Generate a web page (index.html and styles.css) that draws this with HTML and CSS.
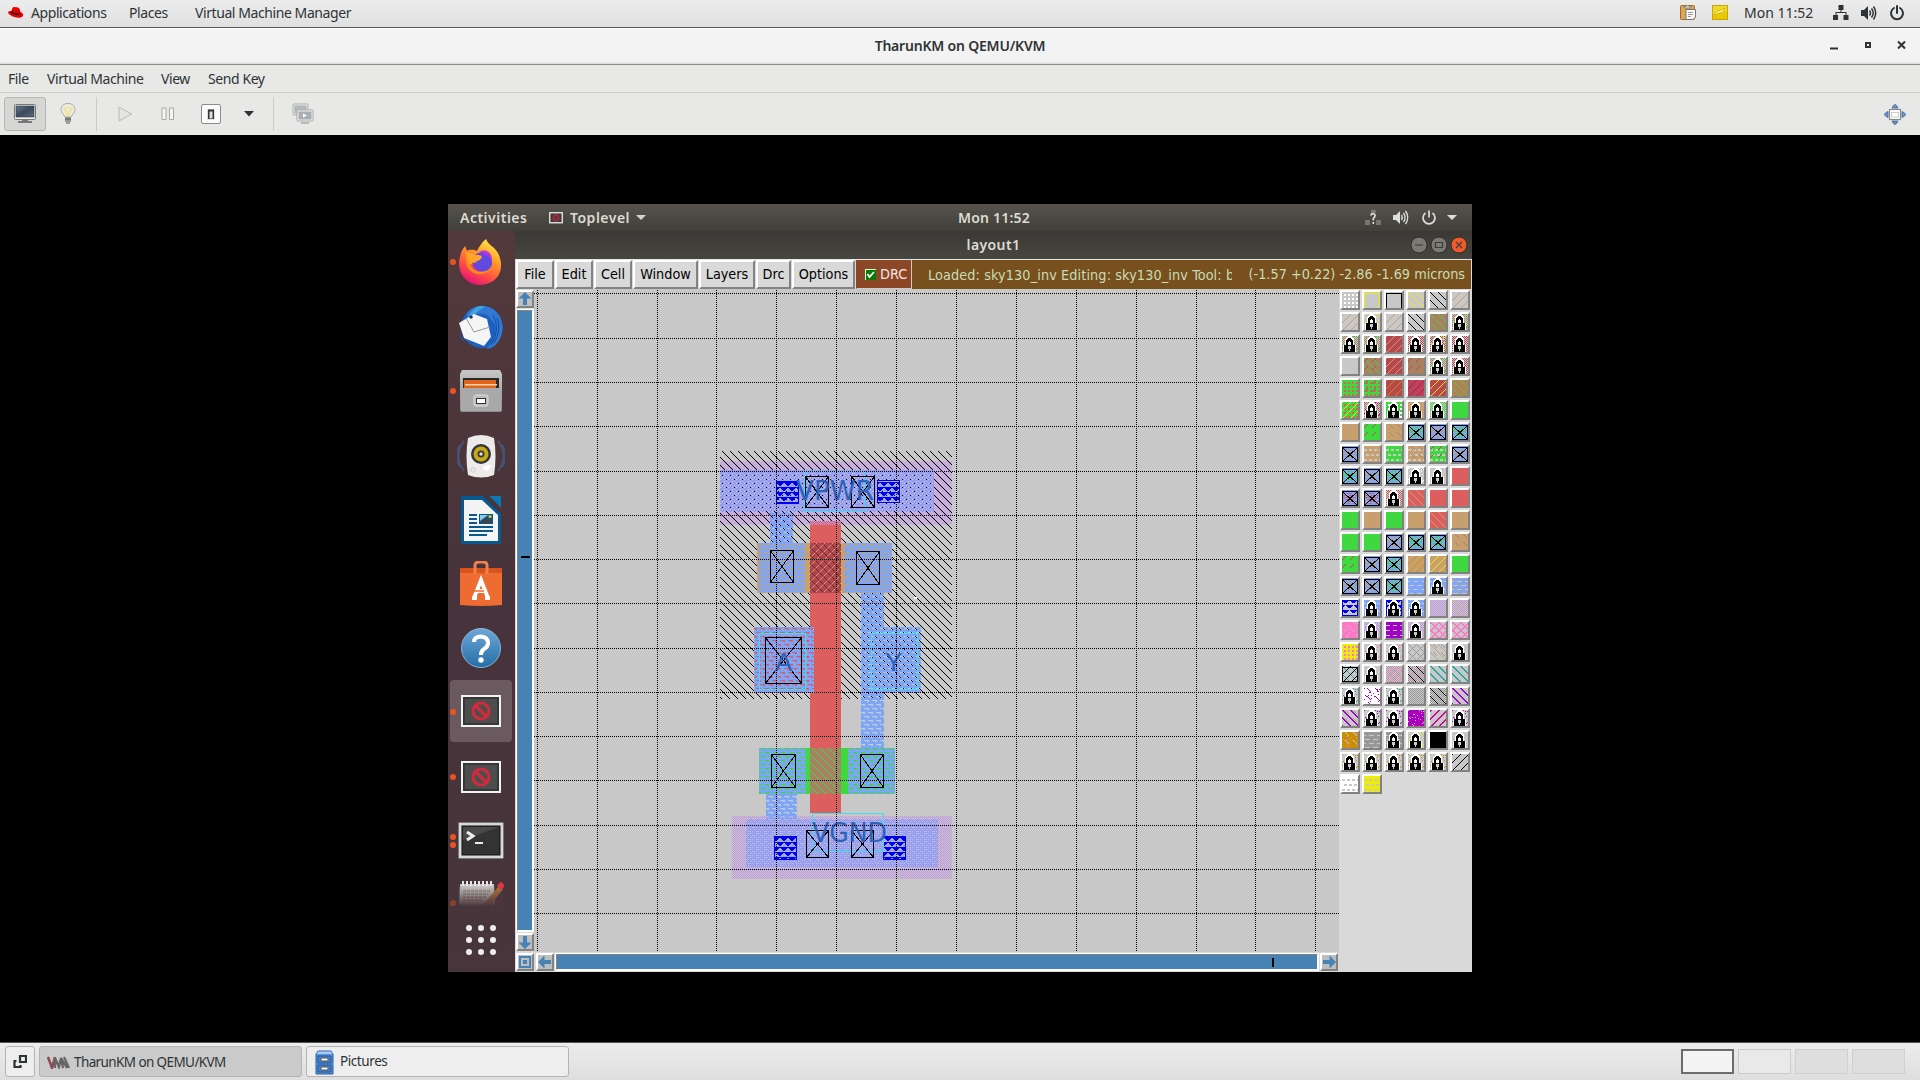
FILE: index.html
```html
<!DOCTYPE html>
<html lang="en">
<head>
<meta charset="utf-8">
<title>TharunKM on QEMU/KVM</title>
<link rel="stylesheet" href="styles.css">
</head>
<body>
<div class="host">
  <header class="panel">
    <svg class="hat" width="16" height="14" viewBox="0 0 16 14"><path d="M4 3C5 0 7 1 8 1.300C11 1 12 3 12.500 6C15 7 16 9 14.500 10.500C12 13 6 11.500 3 9.500C1 8.500-.5 7 .3 5.800C1 5 2.500 5 3.400 5.200Z" fill="#e80000"/><path d="M3.400 5.300C5 8 9 9 12.400 7.600" stroke="#111" stroke-width="1.400" fill="none"/></svg>
    <span class="pm pm1">Applications</span><span class="pm pm2">Places</span><span class="pm pm3">Virtual Machine Manager</span>
    <div class="tray">
      <svg width="17" height="17" viewBox="0 0 17 17"><rect x=".5" y="1.500" width="14" height="14" rx="1" fill="#dda45a" stroke="#a5681c"/><path d="M4 4V2.500H6Q7.500-.5 9 2.500H11V4Z" fill="#ddd" stroke="#777" stroke-width=".8"/><path d="M6 5.500H15.500V13L13 15.500H6Z" fill="#fafafa" stroke="#777"/><path d="M8 8.500H13M8 10.500H13M8 12.500H11" stroke="#999"/></svg>
      <svg class="note" width="16" height="15" viewBox="0 0 16 15"><rect x=".5" y=".5" width="15" height="14" fill="#f1d92a" stroke="#c6a614"/><path d="M1 10L9 4L13 5L6 10L15 6V14H1Z" fill="#e8c800"/><path d="M2 10L4 7L13 3L11 7L5 9Z" fill="#fff27a" stroke="#c6a614" stroke-width=".7"/></svg>
      <span class="clock">Mon 11:52</span>
      <svg class="net" width="16" height="15" viewBox="0 0 16 15" fill="#2e3436"><path d="M5.500 0H10.500V5H5.500ZM0 10H5V15H0ZM10.500 10H15.500V15H10.500ZM7.500 5H8.500V7H13.500V10H12.500V8H3.500V10H2.500V7H7.500Z"/></svg>
      <svg class="vol" width="16" height="16" viewBox="0 0 16 16"><path d="M0 5H3L7 1V15L3 11H0Z" fill="#2e3436"/><path d="M8.500 5.500Q10.500 8 8.500 10.500M10.500 3.500Q14 8 10.500 12.500M12.500 1.500Q17 8 12.500 14.500" fill="none" stroke="#2e3436" stroke-width="1.500"/></svg>
      <svg class="pow" width="16" height="16" viewBox="0 0 16 16"><path d="M5 3A6 6 0 1 0 11 3M8 1V8" fill="none" stroke="#2e3436" stroke-width="2" stroke-linecap="round"/></svg>
    </div>
  </header>
  <div class="titlebar"><b class="wintitle">TharunKM on QEMU/KVM</b>
    <svg class="winbtns" width="78" height="12" viewBox="0 0 78 12"><path d="M1 8.500H9" stroke="#2e3436" stroke-width="2"/><path d="M37 3H41V7H37Z" fill="none" stroke="#2e3436" stroke-width="2"/><path d="M69 1.500L76 8.500M76 1.500L69 8.500" stroke="#2e3436" stroke-width="2"/></svg>
  </div>
  <nav class="menubar"><span class="m1">File</span><span class="m2">Virtual Machine</span><span class="m3">View</span><span class="m4">Send Key</span></nav>
  <div class="toolbar">
    <div class="toolbtn"><svg width="22" height="20" viewBox="0 0 22 20"><defs><linearGradient id="scr" x2="1" y2="1"><stop stop-color="#6b7789"/><stop offset=".5" stop-color="#3c4a5e"/><stop offset="1" stop-color="#5b6b80"/></linearGradient></defs><rect x=".5" y=".5" width="21" height="15" rx="1" fill="#eee" stroke="#777"/><rect x="2" y="2" width="18" height="11" fill="url(#scr)" stroke="#2d3743" stroke-width=".6"/><path d="M8 16H14V17H18V19H4V17H8Z" fill="#777"/></svg></div>
    <svg class="bulb" width="16" height="22" viewBox="0 0 16 22"><path d="M5 14C4 11 1 10 1 6.500A7 6.200 0 0 1 15 6.500C15 10 12 11 11 14Z" fill="#ecebdc" stroke="#aaa"/><path d="M4 6Q8 3 12 6L9 9V13M4 6L7 9V13" fill="none" stroke="#f0dc80" stroke-width="1.200"/><path d="M5 14H11V19H5Z" fill="#9a9a94"/><path d="M5 16H11M6 20H10" stroke="#555"/></svg>
    <i class="sep sep1"></i>
    <svg class="play" width="15" height="16" viewBox="0 0 15 16"><path d="M1 1L13.500 8L1 15Z" fill="#e4e4e2" stroke="#b9b9b6"/></svg>
    <svg class="pause" width="14" height="14" viewBox="0 0 14 14"><path d="M1 1H5V12.500H1ZM8.500 1H12.500V12.500H8.500Z" fill="#f4f4f3" stroke="#a9a9a6"/></svg>
    <svg class="switch" width="20" height="21" viewBox="0 0 20 21"><rect x=".5" y=".5" width="19" height="19" rx="1.500" fill="#fbfbfb" stroke="#8c8c8a"/><rect x="6" y="5" width="8" height="11" fill="#ddd"/><path d="M7 5.500H13V15H7Z" fill="#333"/><path d="M8.500 7.500H11.500V14.500H8.500Z" fill="#ddd"/></svg>
    <svg class="caret" width="10" height="6" viewBox="0 0 10 6"><path d="M0 0H10L5 5.500Z" fill="#2e3436"/></svg>
    <i class="sep sep2"></i>
    <svg class="snaps" width="22" height="22" viewBox="0 0 22 22" stroke="#aaa"><rect x="1" y="1" width="15" height="11" rx="1" fill="#f2f2f0"/><rect x="3" y="3" width="11" height="7" fill="#b3bac0"/><rect x="5" y="7" width="16" height="11" rx="1" fill="#f2f2f0"/><rect x="7" y="9" width="12" height="7" fill="#a7b0b8"/><path d="M11 10.500L15 12.500L11 14.500Z" fill="#fff" stroke="none"/><path d="M9 20H17" stroke-width="1.500"/></svg>
    <svg class="fit" width="22" height="21" viewBox="0 0 22 21"><g fill="#6f93c7" stroke="#3b62a0" stroke-width=".8"><path d="M8 4Q11-3 14 4ZM8 17Q11 24 14 17ZM4 7.500Q-3 10.500 4 13.500ZM18 7.500Q25 10.500 18 13.500Z"/></g><rect x="5.500" y="5.500" width="11" height="10" fill="#fff" stroke="#888a85" stroke-width="1.200"/><rect x="7.500" y="8.500" width="7" height="4.500" fill="none" stroke="#ccc"/></svg>
  </div>
  <main class="viewport">
    <section class="guest">
      <div class="gbar">
        <span class="act">Activities</span>
        <svg class="gapp" width="14" height="12" viewBox="0 0 14 12"><rect x=".75" y=".75" width="12.500" height="10" fill="#3b3b3b" stroke="#eee" stroke-width="1.300"/><circle cx="7" cy="5.800" r="2.800" fill="none" stroke="#c3213b" stroke-width="1.300"/><path d="M5 4L9 8" stroke="#c3213b"/></svg>
        <span class="top">Toplevel</span>
        <svg class="gcaret" width="10" height="5" viewBox="0 0 10 5"><path d="M0 0H10L5 5Z" fill="#d8d5d0"/></svg>
        <span class="gclock">Mon 11:52</span>
        <svg class="gtray" width="92" height="18" viewBox="0 0 92 18"><path d="M6 1H11V4H6ZM0 11H5V16H0ZM11 11H16V16H11Z" fill="#77756e"/><path d="M5.700 6.500Q6.500 4.500 8.500 4.700Q11 5.500 9.500 8L8.300 9.500V11.500M8.300 13V15" fill="none" stroke="#ddd" stroke-width="1.700"/><path d="M28 6H31L35 2V15L31 11H28Z" fill="#ddd"/><path d="M36.500 6Q38 8.500 36.500 11M38.500 4Q41.500 8.500 38.500 13M40.500 2Q45 8.500 40.500 15" fill="none" stroke="#ddd" stroke-width="1.400"/><path d="M60.500 4A6 6 0 1 0 67.500 4M64 1.500V8.500" fill="none" stroke="#ddd" stroke-width="1.700"/><path d="M82 6H92L87 11Z" fill="#ddd"/></svg>
      </div>
      <div class="gbody">
        <aside class="dock">
          <div class="app one"><svg width="46" height="48" viewBox="0 0 46 48"><defs><linearGradient id="ff" x1=".8" y1="0" x2=".3" y2="1"><stop stop-color="#fff44f"/><stop offset=".35" stop-color="#ffa225"/><stop offset=".7" stop-color="#ff4f45"/><stop offset="1" stop-color="#e3107a"/></linearGradient></defs><path d="M28 1C30 7 36 8 40 15C48 31 40 46 23 47C7 47-2 33 2 19C3 13 5 11 7 8L9 13C12 11 16 12 19 13C21 9 24 4 28 1Z" fill="url(#ff)"/><circle cx="24" cy="24" r="10" fill="#7b3fd8"/><path d="M7 9C8 16 10 17 19 17C26 17 24 20 21 23C18 28 14 21 12 27C17 37 31 36 35 24C36 38 12 42 8 25Z" fill="#ff8b1a"/><circle cx="26" cy="25" r="8" fill="#5f4be0"/><path d="M21 13Q34 10 34 23Q30 16 21 13" fill="#b833e1"/><path d="M8 14C16 18 23 16 24 19C22 24 17 22 12 27Z" fill="#ffa52c"/></svg></div>
          <div class="app"><svg width="48" height="48" viewBox="0 0 48 48"><circle cx="25" cy="24" r="21" fill="#1d5fc0"/><path d="M10 11C16 0 35-1 43 14C50 31 40 46 29 46C40 35 42 24 33 15C27 8 17 9 10 20Z" fill="#3178d2"/><path d="M12 12Q20 0 28 4Q17 9 13 20Z" fill="#42a3dd"/><path d="M2 20L17 11L30 16L34 34L27 43L7 35Z" fill="#f5f5f5"/><path d="M9 15L17 29L33 24" fill="none" stroke="#999" stroke-width="1"/><path d="M1 22Q3 37 14 44L4 36Z" fill="#1c58b8"/><path d="M36 12Q44 27 34 42M40 15Q45 27 37 40" stroke="#154ba0" fill="none"/><circle cx="14" cy="14" r="1.800" fill="#203a66"/></svg></div>
          <div class="app one"><svg width="44" height="44" viewBox="0 0 44 44"><defs><linearGradient id="cab" x2="0" y2="1"><stop stop-color="#c8c8c8"/><stop offset="1" stop-color="#8d8d8d"/></linearGradient></defs><path d="M3 1H41L43 5V41Q43 43 41 43H3Q1 43 1 41V5Z" fill="url(#cab)"/><rect x="4" y="9" width="36" height="10" fill="#292929"/><path d="M5 11H37V19H5Z" fill="#df651d"/><path d="M6 15H38V16.500H6Z" fill="#ffd3a5"/><path d="M2 19H42V42H2Z" fill="#a9a9a9"/><rect x="15" y="26" width="14" height="11" rx="2" fill="#bdbdbd" stroke="#ddd"/><rect x="17.500" y="29.500" width="9" height="5" fill="#fff" stroke="#333"/></svg></div>
          <div class="app"><svg width="48" height="44" viewBox="0 0 48 44"><path d="M7 7Q-4 22 7 37M41 7Q52 22 41 37M3 11Q-3 22 3 33M45 11Q51 22 45 33" stroke="#485170" stroke-width="2" fill="none"/><path d="M11 4Q24-2 37 4Q40 22 37 41Q24 46 11 41Q8 22 11 4Z" fill="#ecebe9"/><circle cx="24" cy="20" r="10" fill="#33363a"/><circle cx="24" cy="20" r="7.500" fill="#c9a914"/><circle cx="24" cy="20" r="3.500" fill="#373737"/><circle cx="24" cy="20" r="1.700" fill="#ddd"/><circle cx="16" cy="36" r="2.200" fill="none" stroke="#ccc"/><path d="M27 33Q31 37 32 31" stroke="#fff" stroke-width="4" fill="none"/></svg></div>
          <div class="app"><svg width="40" height="48" viewBox="0 0 40 48"><path d="M2 0H24L40 15V46Q40 48 38 48H2Q0 48 0 46V2Q0 0 2 0Z" fill="#065a8d"/><path d="M28 0H40V12Z" fill="#0878b8"/><path d="M22 0H28L40 12V18Z" fill="#4a343b"/><path d="M3 4H21L37 19V45H3Z" fill="#f4f4f4"/><path d="M8 19H16M8 23H16M8 27H16M8 31H32M8 35H32M8 39H26" stroke="#07598b" stroke-width="2"/><rect x="18" y="18" width="14" height="10" fill="#07598b"/><path d="M19 27L24 21L27 24L29 22L32 27Z" fill="#444"/><circle cx="29" cy="20.500" r="1.500" fill="#f5c211"/><path d="M19 19H27L19 25Z" fill="#8fc8eb"/></svg></div>
          <div class="app"><svg width="42" height="46" viewBox="0 0 42 46"><path d="M0 7H42V44Q21 46 0 44Z" fill="#ee6b31"/><path d="M0 7H42V12H0Z" fill="#d9541c"/><path d="M15 13V4Q15 1 19 1H23Q27 1 27 4V13" fill="none" stroke="#f08050" stroke-width="3"/><path d="M12 37H17M25 37H30M14 37L21 19L28 37M15 30H27" stroke="#fff" stroke-width="3.800" fill="none"/><path d="M14 30H24" stroke="#ee6b31" stroke-width="1.500"/></svg></div>
          <div class="app"><svg width="42" height="42" viewBox="0 0 42 42"><defs><linearGradient id="hp" x2="0" y2="1"><stop stop-color="#6ea6d9"/><stop offset="1" stop-color="#246ea6"/></linearGradient></defs><circle cx="21" cy="21" r="19.500" fill="url(#hp)" stroke="#8ab4da"/><path d="M14 15Q14 9.500 21 9.500Q28 10 28 16Q28 20 24 22Q21 24 21 28" fill="none" stroke="#fff" stroke-width="4"/><circle cx="21" cy="33" r="2.700" fill="#fff"/></svg></div>
          <div class="app one active"><svg width="40" height="32" viewBox="0 0 40 32"><use href="#noentry"/></svg></div>
          <div class="app one"><svg width="40" height="32" viewBox="0 0 40 32"><g id="noentry"><rect x="1" y="1" width="38" height="30" fill="#444" stroke="#f2f2f2" stroke-width="2"/><rect x="3" y="3" width="34" height="26" fill="#4d4d4d" stroke="#262626"/><circle cx="20" cy="16" r="8" fill="none" stroke="#d02b3d" stroke-width="3.200"/><path d="M14.500 10.500L25.500 21.500" stroke="#d02b3d" stroke-width="3.200"/></g></svg></div>
          <div class="app two"><svg width="46" height="38" viewBox="0 0 46 38"><rect x=".5" y=".5" width="45" height="36" rx="1" fill="#d8d8d6" stroke="#777"/><rect x="4" y="4" width="38" height="29" fill="#333" stroke="#111"/><path d="M5 5H41L5 18Z" fill="#4a4a4a"/><path d="M9 10L15 14L9 18" fill="none" stroke="#eee" stroke-width="3"/><path d="M17 21H25" stroke="#eee" stroke-width="2"/></svg></div>
          <div class="app one fade"><svg width="46" height="26" viewBox="0 0 46 26"><defs><linearGradient id="fd" x2="0" y2="1"><stop stop-color="#4a353b" stop-opacity="0"/><stop offset="1" stop-color="#4a353b"/></linearGradient></defs><path d="M2 4H36L37 26H1Z" fill="#c6c3c0"/><path d="M5 1V6M9 1V6M13 1V6M17 1V6M21 1V6M25 1V6M29 1V6M33 1V6" stroke="#e5e5e5" stroke-width="2"/><path d="M5 11H33M5 14H30M5 17H28M5 20H25" stroke="#777" stroke-dasharray="3 1"/><path d="M24 26L41 6L45 9L32 26Z" fill="#b67635"/><path d="M39 6L42 2Q47 3 46 7L43 10Z" fill="#e03842"/><rect y="6" width="46" height="20" fill="url(#fd)"/></svg></div>
          <div class="allapps"><svg width="30" height="30" viewBox="0 0 30 30" fill="#eee"><circle cx="3" cy="3" r="3"/><circle cx="15" cy="3" r="3"/><circle cx="27" cy="3" r="3"/><circle cx="3" cy="15" r="3"/><circle cx="15" cy="15" r="3"/><circle cx="27" cy="15" r="3"/><circle cx="3" cy="27" r="3"/><circle cx="15" cy="27" r="3"/><circle cx="27" cy="27" r="3"/></svg></div>
        </aside>
        <div class="magic">
          <div class="mtitle"><b>layout1</b>
            <svg width="58" height="18" viewBox="0 0 58 18"><g stroke="#2f2e2a"><circle cx="9" cy="9" r="8" fill="#7b7972"/><circle cx="29" cy="9" r="8" fill="#7b7972"/><circle cx="49" cy="9" r="8" fill="#ee5a2b"/></g><path d="M5 9H13M25.500 6.500H32.500V11.500H25.500ZM46 6L52 12M52 6L46 12" fill="none" stroke="#3c3b37" stroke-width="1.200"/></svg>
          </div>
          <div class="mmenu">
            <span class="mb w1">File</span><span class="mb w2">Edit</span><span class="mb w3">Cell</span><span class="mb w4">Window</span><span class="mb w5">Layers</span><span class="mb w6">Drc</span><span class="mb w7">Options</span>
            <span class="drc"><svg width="11" height="11" viewBox="0 0 11 11"><rect width="11" height="11" fill="#cfc"/><rect x="1" y="1" width="10" height="10" fill="#087a08"/><path d="M2.500 5L4.500 8L9 3" fill="none" stroke="#fff" stroke-width="1.800"/></svg>DRC</span>
            <span class="status"><span class="loaded">Loaded: sky130_inv Editing: sky130_inv Tool: b</span><span class="coords">(-1.57 +0.22) -2.86 -1.69 microns</span></span>
          </div>
          <div class="work">
            <div class="draw">
              <div class="vscroll">
                <i class="sb"><svg width="14" height="14" viewBox="0 0 14 14"><path d="M7 0L13.500 6.500H9V13H5V6.500H.5Z"/></svg></i>
                <i class="trough"><i class="vmark"></i></i>
                <i class="sb"><svg width="14" height="14" viewBox="0 0 14 14"><path d="M7 14L13.500 7.500H9V1H5V7.500H.5Z"/></svg></i>
              </div>
              <svg class="canvas" width="805" height="663" viewBox="534 289 805 663" shape-rendering="crispEdges">
                <defs>
                  <pattern id="nw" width="8" height="8" patternUnits="userSpaceOnUse" x="722" y="451"><path d="M0 0h1v1h-1zM1 1h1v1h-1zM2 2h1v1h-1zM3 3h1v1h-1zM4 4h1v1h-1zM5 5h1v1h-1zM6 6h1v1h-1zM7 7h1v1h-1z"/></pattern>
                  <pattern id="tn" width="8" height="8" patternUnits="userSpaceOnUse"><path fill="#c8a070" d="M7 0h1v1h-1zM6 1h1v1h-1zM5 2h1v1h-1zM4 3h1v1h-1zM3 4h1v1h-1zM2 5h1v1h-1zM1 6h1v1h-1zM0 7h1v1h-1z"/></pattern>
                  <pattern id="gn" width="8" height="8" patternUnits="userSpaceOnUse"><path fill="#40d840" d="M0 0h1v1h-1zM1 1h1v1h-1zM2 2h1v1h-1zM3 3h1v1h-1zM4 4h1v1h-1zM5 5h1v1h-1zM6 6h1v1h-1zM7 7h1v1h-1z"/></pattern>
                  <pattern id="ck" width="2" height="2" patternUnits="userSpaceOnUse"><path fill="#c296e4" d="M0 0h1v1h-1zM1 1h1v1h-1z"/></pattern>
                  <pattern id="li" width="8" height="8" patternUnits="userSpaceOnUse" y="3"><path fill="#7da6f9" d="M0 0h8v1h-8zM5 1h3v1h-3zM0 2h3v1h-3zM5 2h3v1h-3zM0 3h8v2h-8zM1 5h3v1h-3zM1 6h6v1h-6zM0 7h8v1h-8z"/></pattern>
                  <pattern id="m1" width="8" height="8" patternUnits="userSpaceOnUse"><path fill="#92a0f5" d="M0 0h8v1h-8zM0 1h1v1h-1zM2 1h2v1h-2zM5 1h1v1h-1zM0 2h8v1h-8zM1 3h1v1h-1zM3 3h1v1h-1zM6 3h2v1h-2zM0 4h8v1h-8zM0 5h1v1h-1zM4 5h2v1h-2zM0 6h8v1h-8zM1 7h2v1h-2zM5 7h1v1h-1zM7 7h1v1h-1z"/></pattern>
                  <pattern id="vi" width="8" height="10" patternUnits="userSpaceOnUse" x="776" y="481"><path fill="#0000f0" d="M0 1h8v1h-8zM1 2h6v1h-6zM2 3h4v1h-4zM3 4h2v1h-2zM0 6h8v1h-8zM0 7h3v1h-3zM5 7h3v1h-3zM0 8h2v1h-2zM6 8h2v1h-2zM0 9h1v1h-1zM7 9h1v1h-1z"/></pattern>
                </defs>
                <rect x="534" y="289" width="805" height="663" fill="#c8c8c8"/>
                <rect x="720" y="451" width="232" height="248" fill="url(#nw)"/>
                <rect x="810" y="521" width="31" height="292" fill="#dd5e5e"/>
                <rect x="757" y="543" width="135" height="50" fill="#c8a070"/>
                <rect x="810" y="543" width="31" height="50" fill="#b34450"/>
                <rect x="810" y="543" width="31" height="50" fill="url(#tn)"/>
                <rect x="810" y="543" width="31" height="50" fill="url(#nw)" opacity=".4"/>
                <rect x="720" y="461" width="232" height="64" fill="url(#ck)"/>
                <rect x="732" y="816" width="220" height="63" fill="url(#ck)"/>
                <rect x="754" y="627" width="60" height="66" fill="#dd5e5e"/>
                <rect x="759" y="748" width="136" height="46" fill="#40d840"/>
                <rect x="810" y="748" width="31" height="46" fill="#aa8062"/>
                <rect x="810" y="748" width="31" height="46" fill="url(#gn)"/>
                <path fill="url(#li)" d="M770 512h23v31h-23zM759 543h46v50h-46zM845 543h47v50h-47zM861 593h23v34h37v66h-37v55h-23zM754 627h60v66h-60zM759 748h47v46h-47zM848 748h47v46h-47zM766 794h31v25h-31z"/>
                <path fill="url(#m1)" d="M720 470h214v42h-214zM746 819h192v48h-192z"/>
                <g fill="url(#vi)" stroke="#0000f0"><path d="M776.500 481.500h22v22h-22zM877.500 480.500h22v22h-22zM774.500 836.500h22v23h-22zM883.500 836.500h22v23h-22z"/></g>
                <g fill="none" stroke="#40e0e8"><path d="M804.500 471.500h60v40h-60zM812.500 813.500h71v38h-71zM759.500 633.500h46v56h-46zM871.500 633.500h46v56h-46z"/></g>
                <g fill="none" stroke="#000"><path d="M805.500 476.500h23v31h-23zM851.500 476.500h23v31h-23zM770.500 550.500h23v32h-23zM856.500 551.500h23v33h-23zM765.500 637.500h36v46h-36zM771.500 754.500h24v33h-24zM860.500 754.500h23v33h-23zM806.500 830.500h22v27h-22zM851.500 830.500h22v27h-22z"/><path d="M805 476l24 32m0-32l-24 32M851 476l24 32m0-32l-24 32M770 550l24 33m0-33l-24 33M856 551l24 34m0-34l-24 34M765 637l37 47m0-47l-37 47M771 754l25 34m0-34l-25 34M860 754l24 34m0-34l-24 34M806 830l23 28m0-28l-23 28M851 830l23 28m0-28l-23 28"/></g>
                <g class="lbl"><text x="796" y="500" textLength="78" lengthAdjust="spacingAndGlyphs">VPWR</text><text x="812" y="842" textLength="75" lengthAdjust="spacingAndGlyphs">VGND</text><text x="775" y="671">A</text><text x="885" y="671">Y</text></g>
                <path d="M534 293.500H1339M534 338.500H1339M534 382.500H1339M534 426.500H1339M534 471.500H1339M534 515.500H1339M534 559.500H1339M534 603.500H1339M534 648.500H1339M534 692.500H1339M534 736.500H1339M534 780.500H1339M534 825.500H1339M534 869.500H1339M534 913.500H1339M537.500 290V952M597.500 290V952M657.500 290V952M716.500 290V952M776.500 290V952M836.500 290V952M896.500 290V952M956.500 290V952M1016.500 290V952M1076.500 290V952M1136.500 290V952M1196.500 290V952M1255.500 290V952M1315.500 290V952" stroke="#000" stroke-dasharray="1 1" fill="none"/>
                <rect x="914" y="597" width="3" height="2" fill="#fff"/>
              </svg>
              <div class="hscroll">
                <i class="sb"><svg width="14" height="14" viewBox="0 0 14 14"><path d="M1 1H13V13H1Z" fill="#4682b4"/><path d="M3 3H11V11H3Z" fill="#bebebe"/><path d="M5 5H9V9H5Z"/></svg></i>
                <i class="sb lb"><svg width="14" height="14" viewBox="0 0 14 14"><path d="M0 7L6.500 .5V5H13V9H6.500V13.500Z"/></svg></i>
                <i class="trough"><i class="hmark"></i></i>
                <i class="sb"><svg width="14" height="14" viewBox="0 0 14 14"><path d="M14 7L7.500 .5V5H1V9H7.500V13.500Z"/></svg></i>
              </div>
            </div>
            <div class="palette" id="palette"></div>
          </div>
        </div>
      </div>
    </section>
  </main>
  <footer class="taskbar">
    <div class="tsk show"><svg width="14" height="15" viewBox="0 0 14 15" fill="none" stroke="#2e3436" stroke-width="2.200"><path d="M7 2H13V8H7ZM3.500 7H1.500V13H7.500V11"/></svg></div>
    <div class="tsk on"><svg width="23" height="13" viewBox="0 0 23 13" fill="none"><path d="M1 1L5 12L8 1" stroke="#8a4a56" stroke-width="2.500"/><path d="M8 12V2L12 11L14 2L16 12M14 2L20 12M17 1L22 12" stroke="#666" stroke-width="2.300"/></svg><span>TharunKM on QEMU/KVM</span></div>
    <div class="tsk pics"><svg width="19" height="25" viewBox="0 0 19 25"><path d="M3 1H16L18 4V24H1V4Z" fill="#5b92d8" stroke="#2b5ea6"/><path d="M3 1.500H16L17.500 4H1.500Z" fill="#a9cbf3"/><path d="M3 6H16V13H3ZM3 15H16V22H3Z" fill="#4a82cc" stroke="#24569c"/><path d="M6 8H13V11H6ZM6 17H13V20H6Z" fill="#fff" stroke="#555"/></svg><span>Pictures</span></div>
    <div class="ws"><i class="cur"></i><i></i><i class="dim"></i><i class="dim"></i></div>
  </footer>
</div>
<script src="palette.js"></script>
</body>
</html>
```
FILE: styles.css
```css
* { box-sizing: border-box; }
body { margin: 0; background: #000; overflow: hidden; }
svg { display: block; flex: none; }
i { font-style: normal; display: block; }
.host { width: 1920px; height: 1080px; display: flex; flex-direction: column; font: 14px/1 "Noto Sans", "Open Sans", sans-serif; color: #2e3436; white-space: nowrap; letter-spacing: -.42px; }

.panel { height: 28px; flex: none; display: flex; align-items: center; padding: 0 15px 2px 8px; background: linear-gradient(#ececec, #e0e0e0); border-bottom: 1px solid #595959; }
.hat { margin-right: 7px; }
.pm1 { width: 98px; }
.pm2 { width: 66px; }
.tray { margin-left: auto; display: flex; align-items: center; }
.note { margin: 0 16px 0 15px; }
.clock { width: 88px; font-size: 14px; letter-spacing: 0; }
.net { margin-left: 1px; }
.vol { margin: 0 12px 0 12px; }

.titlebar { height: 37px; flex: none; display: grid; grid-template-columns: 1fr auto 1fr; align-items: center; background: linear-gradient(#fff 1px, #f4f4f4 1px, #f2f2f2 34px, #d8d8d6); border-bottom: 1px solid #8f8f8a; }
.wintitle { grid-column: 2; font-size: 14px; font-weight: 600; letter-spacing: -.2px; }
.winbtns { justify-self: end; margin-right: 13px; }

.menubar { height: 28px; flex: none; display: flex; align-items: center; padding: 0 8px; background: #e8e8e7; border-bottom: 1px solid #cfcfcd; }
.m1 { width: 39px; }
.m2 { width: 114px; }
.m3 { width: 47px; }

.toolbar { height: 42px; flex: none; display: flex; align-items: center; padding: 0 14px 0 4px; background: #e8e8e7; }
.toolbtn { width: 42px; height: 34px; display: flex; align-items: center; justify-content: center; background: #d6d6d5; border: 1px solid #b5b5b3; border-radius: 3px; }
.bulb { margin: 0 20px 0 14px; }
.sep { width: 1px; height: 34px; background: #cbcbc9; }
.play { margin-left: 21px; }
.pause { margin-left: 28px; }
.switch { margin-left: 26px; }
.caret { margin-left: 23px; }
.sep2 { margin: 0 18px 0 19px; }
.fit { margin-left: auto; }

.viewport { flex: 1; min-height: 0; background: #000; padding: 69px 0 0 448px; }
.guest { width: 1024px; height: 768px; display: flex; flex-direction: column; overflow: hidden; background: #d9d9d9; }
.gbar { height: 27px; flex: none; display: flex; align-items: center; padding: 0 15px 0 12px; background: linear-gradient(#56534b, #403f3a); color: #dfdbd2; font-weight: 600; font-size: 14px; letter-spacing: .5px; }
.act { width: 89px; }
.top { margin: 0 6px 0 7px; }
.gclock { margin-left: 312px; letter-spacing: .2px; }
.gtray { margin-left: auto; }
.gbody { flex: 1; min-height: 0; display: flex; }

.dock { width: 67px; flex: none; display: flex; flex-direction: column; padding: 0 3px 0 2px; background: linear-gradient(#53393b, #46333b 50%, #48353c); overflow: hidden; }
.app { height: 64.2px; flex: none; width: 62px; display: grid; place-items: center; position: relative; border-radius: 4px; }
.app:first-child { margin: -1px 0 1px; }
.one::before, .two::before { content: ""; position: absolute; left: 0; top: 29px; width: 6px; height: 6px; border-radius: 50%; background: #e95420; }
.two::before { top: 25px; box-shadow: 0 8px 0 #e95420; }
.active { height: 62px; margin: 0 0 2.2px; background: #6a5a60; }
.fade { height: 35px; }
.fade svg { align-self: end; margin-bottom: 2px; }
.fade::before { top: 27px; opacity: .4; }
.allapps { flex: 1; display: grid; place-items: center; }

.magic { width: 957px; display: flex; flex-direction: column; font-family: "DejaVu Sans Condensed", "DejaVu Sans", sans-serif; font-stretch: condensed; font-size: 14.3px; letter-spacing: 0; color: #000; }
.mtitle { height: 28px; flex: none; display: grid; grid-template-columns: 1fr auto 1fr; align-items: center; padding: 0 4px; background: linear-gradient(#3a3935, #484640); color: #dfdbd2; font: 600 14px/1 "Noto Sans", "Open Sans", sans-serif; letter-spacing: .4px; }
.mtitle b { grid-column: 2; font-weight: 600; }
.mtitle svg { justify-self: end; }
.mmenu { height: 30px; flex: none; display: flex; border-top: 1px solid #e6e6e6; padding: 0 1px; background: #d9d9d9; }
.mb { display: grid; place-items: center; margin-right: 1px; border: 2px solid; border-color: #fff #828282 #828282 #fff; background: #d9d9d9; }
.w1 { width: 38px; }
.w2 { width: 38px; }
.w3 { width: 38px; }
.w4 { width: 65px; }
.w5 { width: 56px; }
.w6 { width: 35px; }
.w7 { width: 63px; }
.drc { width: 56px; display: flex; align-items: center; gap: 4px; padding: 0 0 0 8px; background: #8b4726; border: 1px solid #ccc; border-left-color: #8b4726; border-top: 0; color: #ffe4e1; }
.status { flex: 1; display: flex; justify-content: space-between; align-items: center; padding: 0 6px 0 16px; background: #78501d; color: #c7dcb8; }
.loaded { width: 304px; line-height: 20px; overflow: hidden; letter-spacing: .11px; }

.work { flex: 1; min-height: 0; display: flex; }
.draw { width: 824px; flex: none; display: grid; grid-template-columns: 19px 805px; grid-template-rows: 663px 20px; }
.vscroll { display: flex; flex-direction: column; align-items: center; padding: 1px 1px 1px; gap: 1px; }
.sb { width: 18px; height: 18px; flex: none; display: grid; place-items: center; background: #bebebe; border: 2px solid; border-color: #fff #828282 #828282 #fff; fill: #4682b4; }
.trough { flex: 1; background: #4682b4; border: 1px solid; border-color: #828282 #fff #fff #828282; box-shadow: 0 0 0 1px #fff; }
.vscroll .trough { width: 16px; margin: 1px 0; }
.vmark { width: 9px; height: 2px; background: #000; margin: 245px 0 0 3px; }
.hscroll { grid-column: 1 / 3; display: flex; align-items: center; padding: 0 1px; gap: 2px; }
.hscroll .trough { height: 16px; margin: 0; }
.hmark { width: 2px; height: 9px; background: #000; margin: 3px 0 0 715px; }
.lbl { font-family: "DejaVu Sans", sans-serif; font-stretch: normal; font-size: 26px; fill: #2c62b8; }
.lbl text:nth-child(n+3) { font-family: "Liberation Sans", sans-serif; }

.palette { flex: 1; display: grid; grid-template-columns: repeat(6, 20px); grid-auto-rows: 20px; gap: 2px; align-content: start; padding: 1px 0 0 1px; background: #d9d9d9; }
.sw { border: 2px solid; border-color: #fff #828282 #828282 #fff; background: #c8c8c8; }

.taskbar { height: 38px; flex: none; display: flex; align-items: center; padding: 0 15px 0 5px; background: linear-gradient(#ececec, #dedede); border-top: 1px solid #555; font-size: 13.500px; }
.tsk { height: 31px; display: flex; align-items: center; border: 1px solid #b4b4b4; border-radius: 3px; background: #eee; }
.show { width: 30px; justify-content: center; margin-right: 4px; }
.on { width: 263px; padding: 2px 0 0 7px; gap: 4px; margin-right: 4px; background: #cacaca; letter-spacing: -.6px; }
.pics { width: 263px; padding: 1px 0 0 8px; gap: 6px; }
.ws { margin-left: auto; display: flex; gap: 4px; }
.ws i { width: 53px; height: 25px; border: 1px solid #ccc; background: #e9e9e9; }
.ws .cur { border: 2px solid #6c6c6c; background: #f4f4f4; }
.ws .dim { background: #dedede; border-color: #d0d0d0; }
```
FILE: palette.js
```js
// Layer swatches: each entry is a space-separated list of drawing steps, "step" or "step:color".
const C = { w: '#fff', y: '#f0ee00', k: '#000', t: '#c8a070', g: '#40d840', n: '#aa8062', r: '#b84850', c: '#dd5e5e', o: '#c89000', m: '#cc00a0', b: '#7da6f9', v: '#0000f0', u: '#c296e4', p: '#ff78c8', q: '#a000c8', a: '#989898', s: '#c8c8c8', e: '#20a8a0' };
const rows = [
  'D:w|O:y|O:k|B:y|B:k|F:t', 'F:t|P:y L|F:t|B:k|S:n B:g|K:n P:g L',
  'K:n P:g L|K:n P:g L|S:r F:t|K:r L|K:r P:y L|K:r L', '|S:n B:g H:r|S:r F:t|S:n H:r|K:n P:g L|K:r L',
  'S:g D:c|S:g D:c H:r|S:r F:o|S:r F:m|S:r F:y|S:n B:g F:o', 'S:g D:c F:y|K:n P:m L|S:g D:w L|S:t L|K:g L|S:g',
  'S:t|S:g H:r|S:t J:n|X:g|X:t|X:g', 'X:t|S:t E:s|S:g E:s|S:t E:s J:n|S:g E:s H:r|X:t',
  'X:g|X:t|X:g|P:w L|L|S:c', 'X:c|X:c|K:c L|S:c B:t|S:c|S:c',
  'S:g|S:t|S:g|S:t|S:c B:t|S:t', 'S:g|S:g|X:t|X:g|X:g|S:t J:n',
  'S:g H:r|X:t|X:g|S:t F:o|S:t F:y|S:g', 'X:t|X:t|X:g|I:b|I:b L|I:b B:t',
  'V:v|I:b L|V:v L|I:b L|K:u|K:u B:t', 'S:p P:s|K:u L|S:q Z:s|K:u L|R:p|B:t R:p',
  'S:y D:p P:s|P:p L|P:p L|Q:a|B:t J:a|L', 'B:e F:k T:k|L|K:a Q:p|K:a Q:p B:k|W:e|B:t W:e',
  'P:e L|S:w J:q P:q|P:e L|K:a|K:a B:k|W:q', 'J:t B:t W:q|P:q L|P:q L|S:q D:m P:s|U:m|P:m L',
  'S:o P:p J:s|I:a|I:a L|P:y L|S:k|L', 'P:o L|P:o L|P:o L|P:o L|P:o L|F:k', 'S:w E:s|S:y E:s'
];
const px = (fn) => {
  let d = '';
  for (let y = 0; y < 16; y++) for (let x = 0; x < 16; x++) if (fn(x, y)) d += `M${x} ${y}h1v1h-1z`;
  return d;
};
const m8 = (n) => (n + 64) % 8;
const shape = {
  S: () => 'M0 0h16v16H0z',
  O: () => 'M0 1h16v15h-1V2H1v14H0z',
  T: () => 'M0 1h16v15H0zM1 2v13h14V2z',
  D: () => px((x, y) => x % 4 > 1 && y % 4 > 1),
  E: () => px((x, y) => (x + (y % 10 > 4 ? 0 : 2)) % 5 > 1 && y % 5 > 2),
  B: () => px((x, y) => m8(x - y) === 0),
  F: () => px((x, y) => m8(x + y) === 0),
  W: () => px((x, y) => m8(x - y) < 2),
  U: () => px((x, y) => m8(x + y) < 2),
  H: () => px((x, y) => m8(x + y) === 3 && y % 8 < 4),
  J: () => px((x, y) => m8(x - y) === 3 && y % 8 < 4),
  P: () => px((x, y) => (x * 7 + y * 5 + ((x * y) % 5)) % 11 === 0),
  K: () => px((x, y) => (x + y) % 2 === 0),
  I: () => px((x, y) => !((y % 4 === 3) && (x + y) % 8 < 5)),
  V: () => px((x, y) => x === 0 || y === 0 || x === 15 || y === 15 || (y % 5 < 3 && (x + (y % 10 > 4 ? 4 : 0)) % 8 >= y % 5 && (x + (y % 10 > 4 ? 4 : 0)) % 8 < 7 - y % 5)),
  Z: () => px((x, y) => y % 5 === 3 && x % 7 < 4),
  Q: () => px((x, y) => m8(x - y) === 0 || m8(x + y) === 0),
  R: () => px((x, y) => m8(x - y) < 2 || m8(x + y) < 2)
};
const lock = '<path d="M1 16V9H3V3L6 0H9L12 3V9H14V16Z" fill="#fff"/><path d="M4 9V4H5V3H6V2H9V3H10V4H11V9H9V6H8V5H7V6H6V9Z"/><path d="M2 9H13V16H2Z"/><path d="M6 10H9V13H8V15H7V13H6Z" fill="#ccc"/>';
const box = (c) => `<path d="${shape.S()}" fill="${c}"/><path d="${shape.I()}" fill="#7da6f9"/><path d="${px((x, y) => y % 4 === 1 && (x + y) % 6 < 3)}" fill="${c}"/><path d="M.5 1.500H15.500V15.500H.5ZM1 2L15 15M15 2L1 15" fill="none" stroke="#000"/>`;
const step = (t) => {
  const [k, c] = t.split(':');
  if (k === 'L') return lock;
  if (k === 'X') return box(C[c]);
  return `<path d="${shape[k]()}" fill="${C[c]}" fill-rule="evenodd"/>`;
};
document.getElementById('palette').innerHTML = rows.join('|').split('|').map((s) =>
  `<div class="sw"><svg width="16" height="16" viewBox="0 0 16 16" shape-rendering="crispEdges">${s ? s.split(' ').map(step).join('') : ''}</svg></div>`).join('');
```
